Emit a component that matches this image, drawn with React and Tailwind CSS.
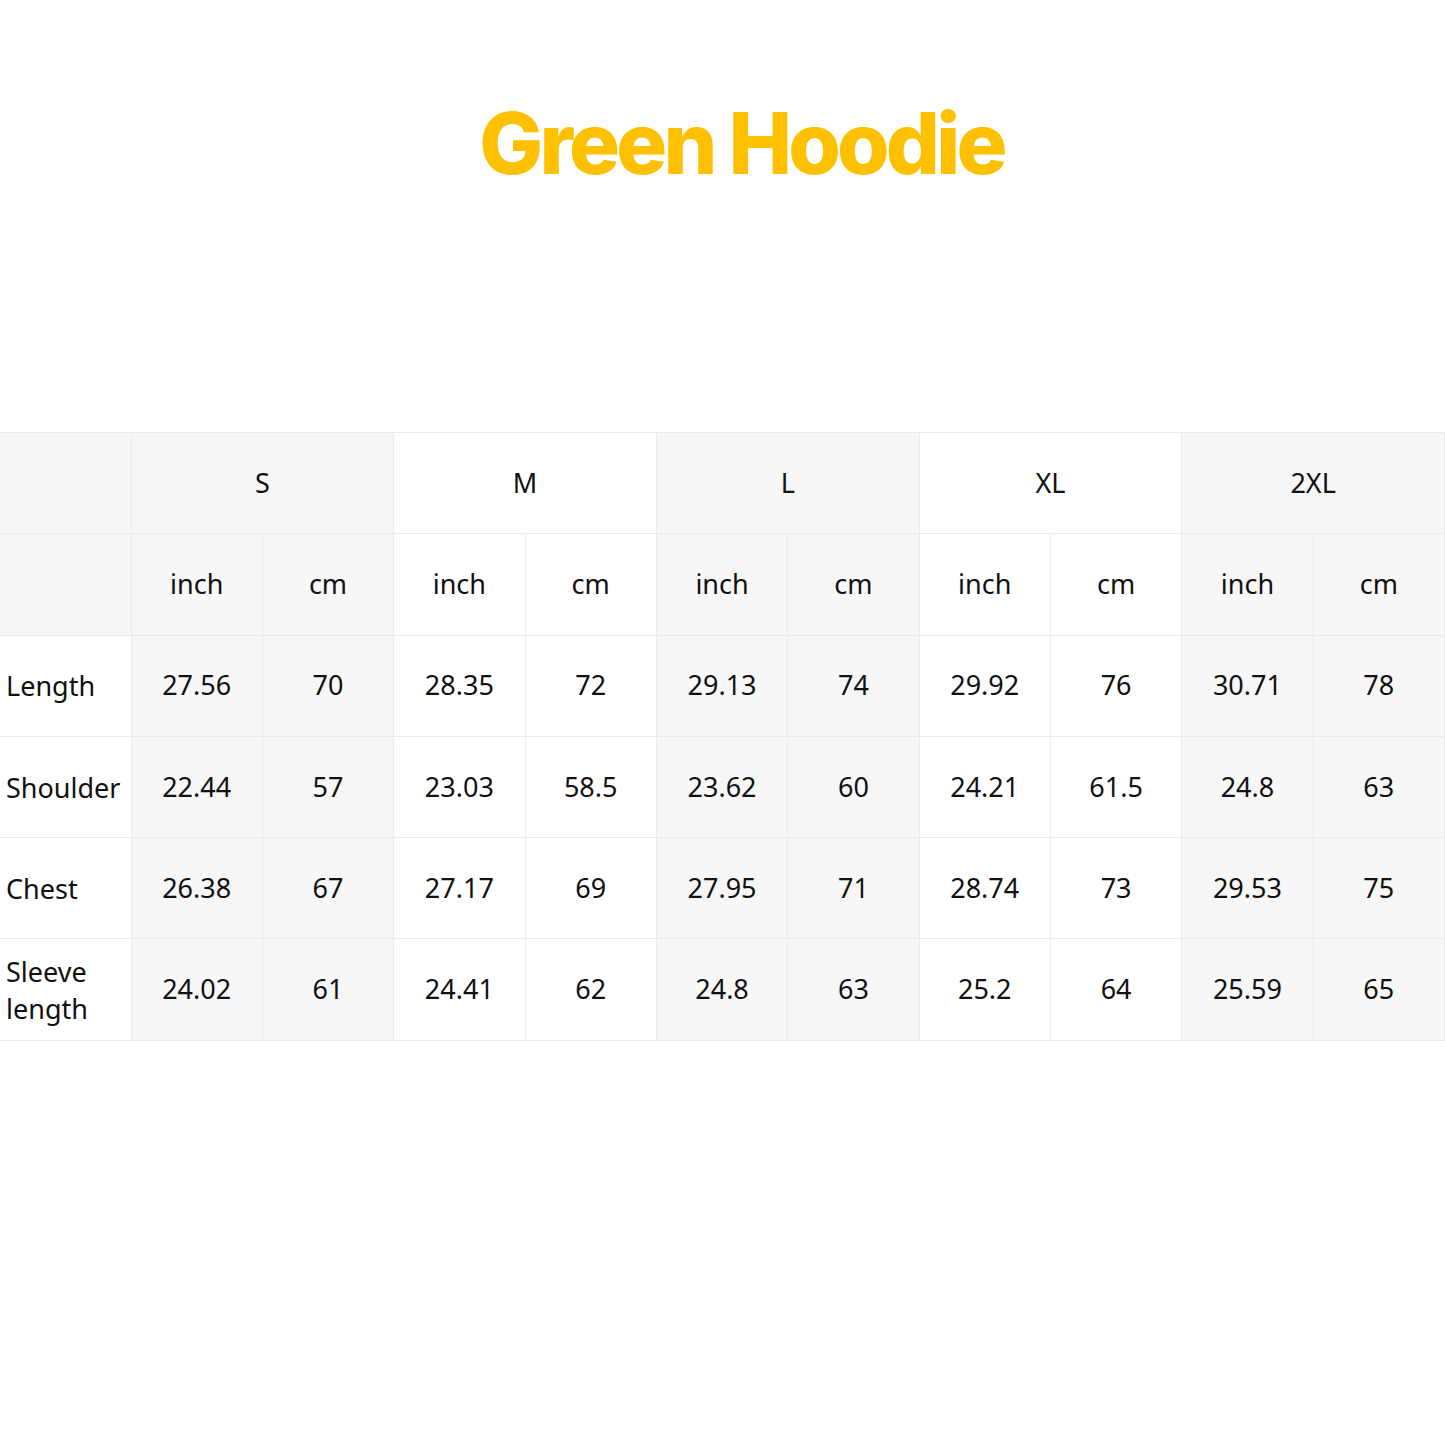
export default function App() {
    const sizes = ["S", "M", "L", "XL", "2XL"];
    const rows = [
        { label: "Length", values: ["27.56", "70", "28.35", "72", "29.13", "74", "29.92", "76", "30.71", "78"] },
        { label: "Shoulder", values: ["22.44", "57", "23.03", "58.5", "23.62", "60", "24.21", "61.5", "24.8", "63"] },
        { label: "Chest", values: ["26.38", "67", "27.17", "69", "27.95", "71", "28.74", "73", "29.53", "75"] },
        { label: "Sleeve length", values: ["24.02", "61", "24.41", "62", "24.8", "63", "25.2", "64", "25.59", "65"] },
    ];

    // size groups alternate gray / white
    const groupBg = (i) => (i % 2 === 0 ? "bg-[#f7f7f7]" : "bg-white");
    const cell = "border border-[#ebebeb] h-[101.3px] text-center align-middle p-0";

    return (
        <div className="w-[1445px] h-[1445px] bg-white" style={{ fontFamily: "'Noto Sans', 'Open Sans', sans-serif" }}>
            {/* Title */}
            <div className="pt-[96px] pl-[38px] flex justify-center">
                <h1
                    className="text-[85px] leading-[96px] font-extrabold tracking-[-0.045em] text-[#ffc000]"
                    style={{ fontFamily: "Inter, 'Noto Sans', sans-serif" }}
                >
                    Green Hoodie
                </h1>
            </div>

            {/* Size table */}
            <div className="mt-[240px]">
                <table className="w-[1445px] border-collapse table-fixed text-[27px] text-[#111]">
                    <colgroup>
                        <col className="w-[131px]" />
                        {Array.from({ length: 10 }).map((_, i) => (
                            <col key={i} />
                        ))}
                    </colgroup>
                    <tbody>
                        <tr>
                            <td className={`${cell} bg-[#f7f7f7] border-l-0`} />
                            {sizes.map((s, i) => (
                                <td key={s} colSpan={2} className={`${cell} ${groupBg(i)}`}>
                                    {s}
                                </td>
                            ))}
                        </tr>
                        <tr>
                            <td className={`${cell} bg-[#f7f7f7] border-l-0`} />
                            {sizes.flatMap((s, i) => [
                                <td key={s + "in"} className={`${cell} ${groupBg(i)}`}>inch</td>,
                                <td key={s + "cm"} className={`${cell} ${groupBg(i)}`}>cm</td>,
                            ])}
                        </tr>
                        {rows.map((r) => (
                            <tr key={r.label}>
                                <td className={`${cell} bg-white border-l-0 text-left pl-[6px] pr-1 leading-[37px]`}>
                                    {r.label}
                                </td>
                                {r.values.map((v, j) => (
                                    <td key={j} className={`${cell} ${groupBg(Math.floor(j / 2))}`}>
                                        {v}
                                    </td>
                                ))}
                            </tr>
                        ))}
                    </tbody>
                </table>
            </div>
        </div>
    );
}
